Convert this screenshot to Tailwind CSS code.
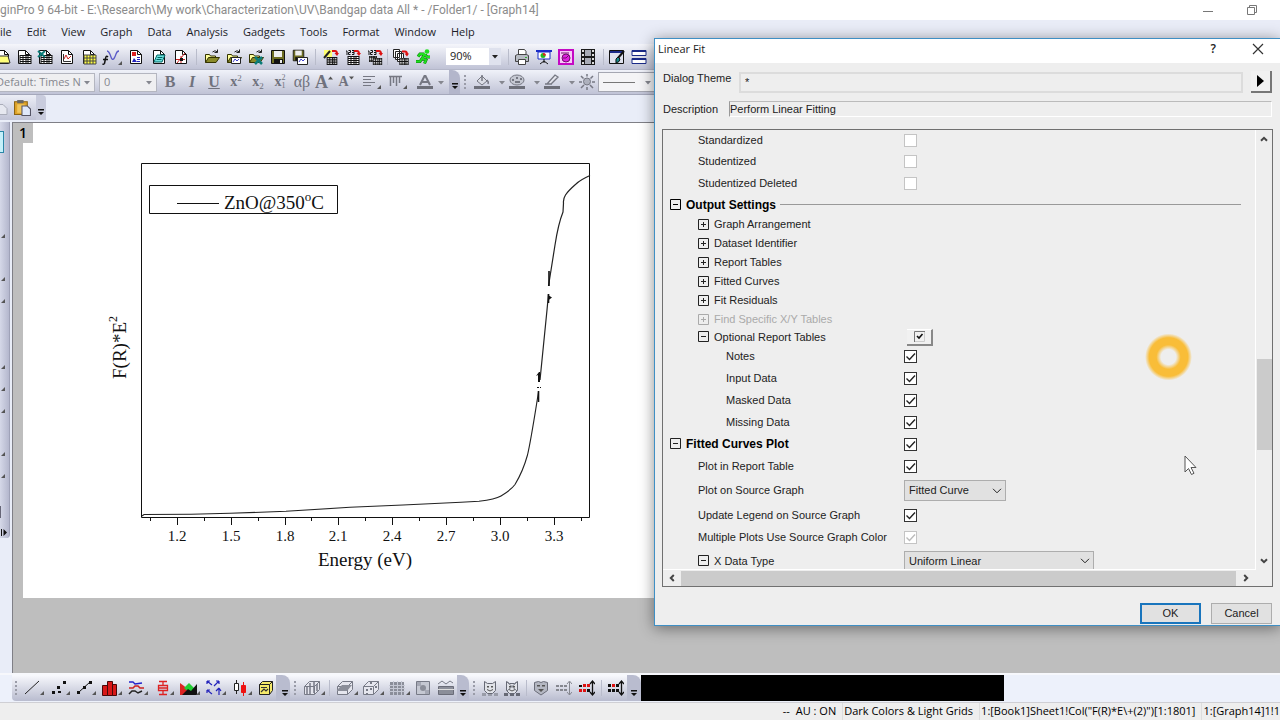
<!DOCTYPE html>
<html lang="en">
<head>
  <meta charset="UTF-8" />
  <meta name="viewport" content="width=device-width, initial-scale=1" />
  <title>OriginPro 9 64-bit - Graph14</title>
  <script src="https://cdn.jsdelivr.net/npm/@tailwindcss/browser@4"></script>
</head>
<body class="relative flex h-screen flex-col overflow-hidden bg-[#e9edf8] font-['Open_Sans','Noto_Sans',sans-serif] text-[11px] text-[#222]">

  <!-- shared icon shapes -->
  <svg class="hidden">
    <symbol id="page" viewBox="0 0 16 16"><path d="M2.5 1.5h7l4 4v9h-11z" fill="#fff" stroke="#111" /><path d="M9.5 1.5v4h4" fill="none" stroke="#111" /></symbol>
    <symbol id="cells" viewBox="0 0 12 9"><path d="M0 0h12v9H0z" fill="#111" /><path d="M1 1h2v1H1zm3 0h2v1H4zm3 0h1v1H7zm2 0h2v1H9zM1 3h2v1H1zm3 0h2v1H4zm3 0h1v1H7zm2 0h2v1H9zM1 5h2v1H1zm3 0h2v1H4zm3 0h1v1H7zm2 0h2v1H9zM1 7h2v1H1zm3 0h2v1H4zm3 0h1v1H7zm2 0h2v1H9z" fill="#fff" /></symbol>
    <symbol id="folder" viewBox="0 0 16 16"><path d="M1.500 13.500v-8h4l1 1.500h5v2" fill="#ffff9c" stroke="#333300" /><path d="M1.500 13.500l3-5h11l-3.500 5z" fill="#8b8b2a" stroke="#333300" /><path d="M8.500 3q2.500-2.500 5 0m0-2.500v3h-3" fill="none" stroke="#222" /></symbol>
    <symbol id="disk" viewBox="0 0 16 16"><path d="M1.500 1.500h13v13h-13z" fill="#6d6d22" stroke="#111" /><path d="M4 2h8v6H4z" fill="#eee" /><path d="M4 10h9v4.500H4z" fill="#111" /><path d="M10 11h2v3h-2z" fill="#eee" /></symbol>
    <symbol id="redarrow" viewBox="0 0 7 6"><path d="M0 1h3q2 0 2 3" fill="none" stroke="#d11" stroke-width="2" /><path d="M2.500 3H7L5 6z" fill="#d11" /></symbol>
    <symbol id="corner" viewBox="0 0 4 4"><path d="M4 0v4H0z" fill="#555" /></symbol>
    <symbol id="down" viewBox="0 0 8 5"><path d="M1 1h6L4 4.500z" fill="currentColor" /></symbol>
    <symbol id="more" viewBox="0 0 8 8"><path d="M1 1h6v1.500H1zM1 4h6L4 7z" fill="#111" /></symbol>
    <symbol id="grip" viewBox="0 0 4 16"><path d="M1 1h2v2H1zm0 4h2v2H1zm0 4h2v2H1zm0 4h2v2H1z" fill="#9a9ca8" /></symbol>
    <symbol id="chev" viewBox="0 0 10 6"><path d="M1 .8l4 4 4-4" fill="none" stroke="currentColor" /></symbol>
    <symbol id="sbarrow" viewBox="0 0 8 6"><path d="M1 4.800l3-3 3 3" fill="none" stroke="#444" stroke-width="2" /></symbol>
    <symbol id="tick" viewBox="0 0 13 13"><path d="M2.500 6.500l3 3 5.500-6" fill="none" stroke="currentColor" stroke-width="1.400" /></symbol>
    <symbol id="plus" viewBox="0 0 12 12"><path d="M.5 .5h10v10H.5zM3 5.500h5M5.500 3v5" fill="none" stroke="currentColor" /></symbol>
    <symbol id="minus" viewBox="0 0 12 12"><path d="M.5 .5h10v10H.5zM3 5.500h5" fill="none" stroke="currentColor" /></symbol>
    <symbol id="cube" viewBox="0 0 18 16"><path d="M1.500 6.500l5-5h10v8l-5 5h-10z M1.500 6.500h10v8M11.500 6.500l5-5" fill="#e5e6ee" stroke="#777a86" /></symbol>
    <symbol id="mask" viewBox="0 0 16 16"><path d="M2.500 1.500l3 2h5l3-2v9l-3 3h-5l-3-3z" fill="#e0e2e8" stroke="#666975" /><path d="M5 6h2v1.500H5zm4 0h2v1.500H9z" fill="#555" /><path d="M5 9.500q3 3 6 0" fill="none" stroke="#555" /></symbol>
  </svg>

  <header class="flex h-5 shrink-0 items-center bg-white text-[#8c8c8c]">
    <h1 class="font-[Roboto,sans-serif] text-xs whitespace-nowrap">ginPro 9 64-bit - E:\Research\My work\Characterization\UV\Bandgap data All * - /Folder1/ - [Graph14]</h1>
    <div class="ml-auto flex items-center gap-8 pr-[22px]">
      <button aria-label="Minimize"><svg class="h-3 w-3" viewBox="0 0 12 12"><path d="M1 7.500h10" stroke="#777" /></svg></button>
      <button aria-label="Restore"><svg class="h-3 w-3" viewBox="0 0 12 12"><path d="M1.500 3.500h7v7h-7zM3.500 3v-1.500h7v7H9" fill="none" stroke="#777" /></svg></button>
    </div>
  </header>

  <nav class="flex h-6 shrink-0 items-center gap-[15px] bg-[#e9ecf7] text-[#1c1c28]">
    <a href="#">ile</a>
    <a href="#">Edit</a>
    <a href="#">View</a>
    <a href="#">Graph</a>
    <a href="#">Data</a>
    <a href="#">Analysis</a>
    <a href="#">Gadgets</a>
    <a href="#">Tools</a>
    <a href="#">Format</a>
    <a href="#">Window</a>
    <a href="#">Help</a>
  </nav>

  <!-- standard toolbar -->
  <div class="flex h-[26px] shrink-0 items-center border-b border-[#b4b7c9] bg-linear-to-b from-[#f5f6fb] to-[#c0c3d6]" role="toolbar" aria-label="Standard">
    <button class="-ml-2 flex w-[22px] shrink-0 justify-center" aria-label="New folder"><svg class="size-4" viewBox="0 0 16 16"><use href="#page" /><path d="M1 7h12l2 7H1z" fill="#ffff7a" stroke="#333" /></svg></button>
    <button class="flex w-[20px] shrink-0 justify-center" aria-label="New workbook"><svg class="size-4" viewBox="0 0 16 16"><use href="#page" /><use href="#cells" x="3" y="6" width="13" height="9" /></svg></button>
    <button class="flex w-[22px] shrink-0 justify-center" aria-label="New Excel"><svg class="size-4" viewBox="0 0 16 16"><use href="#page" /><use href="#cells" x="3" y="6" width="13" height="9" /><path d="M1 2l7 6M8 2L1 8" stroke="#0a7c78" stroke-width="2" /></svg></button>
    <button class="flex w-[22px] shrink-0 justify-center" aria-label="New graph"><svg class="size-4" viewBox="0 0 16 16"><use href="#page" /><path d="M4.500 5v7.500H12" fill="none" stroke="#333" /><path d="M5 10l2-4 2 4 3-3" fill="none" stroke="#c22" /></svg></button>
    <button class="flex w-[22px] shrink-0 justify-center" aria-label="New matrix"><svg class="size-4" viewBox="0 0 16 16"><use href="#page" /><path d="M3 6h12v9H3z" fill="#ffff40" stroke="#444" /><path d="M3 9h12M3 12h12M6 6v9M9 6v9M12 6v9" stroke="#444" /></svg></button>
    <button class="flex w-[24px] shrink-0 justify-center" aria-label="New function"><svg class="h-4 w-5" viewBox="0 0 20 16"><path d="M6 8q-2-2-2.500 1.500l-1 5q-.5 1-2 .5M1 10.500h5" fill="none" stroke="#111" stroke-width="1.500" /><path d="M5 2q2 0 4 6t5-3q1-3 3-3" fill="none" stroke="#5a5ac8" stroke-width="1.300" /><use href="#corner" x="16" y="12" width="4" height="4" /></svg></button>
    <button class="flex w-[24px] shrink-0 justify-center" aria-label="New layout"><svg class="size-4" viewBox="0 0 16 16"><use href="#page" /><path d="M4 3h4v4H4z" fill="#d22" /><path d="M4 13l2-4 3 4z" fill="#22b" /><path d="M9 8.500h3M9 10.500h3M9 12.500h3" stroke="#22b" /></svg></button>
    <button class="flex w-[22px] shrink-0 justify-center" aria-label="New notes"><svg class="size-4" viewBox="0 0 16 16"><use href="#page" /><path d="M6 6h8l-3 7H3z" fill="#6fe0dc" stroke="#066" /><path d="M6.500 8.500h5M5.500 10.500h5" stroke="#066" /></svg></button>
    <button class="flex w-[22px] shrink-0 justify-center" aria-label="Digitize"><svg class="size-4" viewBox="0 0 16 16"><use href="#page" /><path d="M4 14L12 4M8 7v7M3 10.500h9" stroke="#c22" fill="none" /><path d="M7 9h3v3H7z" fill="#111" /></svg></button>
    <span class="mr-1 ml-[4px] h-4 w-px shrink-0 bg-[#b9bccb]"></span>
    <button class="flex w-[22px] shrink-0 justify-center" aria-label="Open"><svg class="size-4"><use href="#folder" /></svg></button>
    <button class="flex w-[22px] shrink-0 justify-center" aria-label="Open template"><svg class="size-4" viewBox="0 0 16 16"><use href="#folder" /><path d="M5.500 8.500h9v6h-9z" fill="#fff" stroke="#222" /><path d="M7 13l2-3 2 2 2-2" stroke="#44c" fill="none" /></svg></button>
    <button class="flex w-[22px] shrink-0 justify-center" aria-label="Open Excel"><svg class="size-4" viewBox="0 0 16 16"><use href="#folder" /><path d="M7 8l7 7M14 8l-7 7" stroke="#0a7c78" stroke-width="2.500" /></svg></button>
    <button class="flex w-[22px] shrink-0 justify-center" aria-label="Save"><svg class="size-4"><use href="#disk" /></svg></button>
    <button class="flex w-[22px] shrink-0 justify-center" aria-label="Save template"><svg class="size-4" viewBox="0 0 16 16"><use href="#disk" width="13" height="13" /><path d="M5.500 8.500h10v7h-10z" fill="#fff" stroke="#222" /><path d="M7 13l2-3 2 2 2-2" stroke="#44c" fill="none" /></svg></button>
    <span class="mx-1 h-4 w-px shrink-0 bg-[#b9bccb]"></span>
    <button class="flex w-[22px] shrink-0 justify-center" aria-label="Import wizard"><svg class="size-4" viewBox="0 0 16 16"><path d="M1 1h8v7H1z" fill="#ffff70" /><path d="M1 9l6-7" stroke="#222" stroke-width="2" /><use href="#redarrow" x="9" y="1" width="7" height="6" /><use href="#cells" x="3" y="8" width="12" height="8" /></svg></button>
    <button class="flex w-[22px] shrink-0 justify-center" aria-label="Import ASCII"><svg class="size-4" viewBox="0 0 16 16"><path d="M1 2h1v4M3.500 1.500h2v2h-2v2h2M7 1.500h2v4H7M7 3.500h2" fill="none" stroke="#111" /><use href="#redarrow" x="9" y="1" width="7" height="6" /><use href="#cells" x="2" y="7" width="13" height="9" /></svg></button>
    <button class="flex w-[22px] shrink-0 justify-center" aria-label="Import multiple ASCII"><svg class="size-4" viewBox="0 0 16 16"><path d="M1 2h1v4M3.500 1.500h2v2h-2v2h2M7 1.500h2v4H7M7 3.500h2" fill="none" stroke="#111" /><use href="#redarrow" x="9" y="1" width="7" height="6" /><use href="#cells" x="1" y="7" width="10" height="6" /><use href="#cells" x="5" y="9" width="11" height="7" /></svg></button>
    <span class="mr-[2px] ml-[1px] h-4 w-px shrink-0 bg-[#b9bccb]"></span>
    <button class="flex w-[22px] shrink-0 justify-center" aria-label="Batch"><svg class="size-4" viewBox="0 0 16 16"><path d="M.5 .5h6v8h-6zM2.500 2.500h6v8h-6zM4.500 4.500h6v8h-6z" fill="#fff" stroke="#222" /><use href="#redarrow" x="9" y="1" width="7" height="7" /><use href="#cells" x="6" y="9" width="10" height="7" /></svg></button>
    <button class="flex w-[22px] shrink-0 justify-center" aria-label="Recalculate"><svg class="size-4" viewBox="0 0 16 16"><path d="M10 5L7 9.500l4 1.500-1.500 3.500M7 9.500L5 12.500H1M9.500 5H5L3 7.500M10 5.500l2 2.500h3" fill="none" stroke="#0a7a0a" stroke-width="3" /><path d="M10 5L7 9.500l4 1.500-1.500 3.500M7 9.500L5 12.500H1M9.500 5H5L3 7.500M10 5.500l2 2.500h3" fill="none" stroke="#1fe01f" stroke-width="2" /><circle cx="12" cy="2.500" r="2.300" fill="#1fe01f" /></svg></button>
    <div class="ml-[12px] flex h-[17px] w-[55px] shrink-0 items-center bg-white">
      <select aria-label="Zoom" class="w-[43px] appearance-none pl-1 text-[11px] outline-none"><option>90%</option></select>
      <span class="flex h-full w-3 items-center justify-center bg-[#dfe2ee]"><svg class="h-[5px] w-2"><use href="#down" /></svg></span>
    </div>
    <span class="mr-[2px] ml-[7px] h-4 w-px shrink-0 bg-[#b9bccb]"></span>
    <button class="flex w-[22px] shrink-0 justify-center" aria-label="Print"><svg class="size-4" viewBox="0 0 16 16"><path d="M4.500 6V.5h6l1.500 2V6" fill="#fff" stroke="#444" /><path d="M1.500 6.500l2-1h9l2 1v6h-13z" fill="#b8bcc4" stroke="#444" /><path d="M4.500 10.500h7v5h-7z" fill="#fff" stroke="#444" /><path d="M11 8h2v1h-2z" fill="#3a3" /></svg></button>
    <button class="flex w-[22px] shrink-0 justify-center" aria-label="Slide show"><svg class="size-4" viewBox="0 0 16 16"><path d="M0 1h16v2H0z" fill="#1a2cc8" /><path d="M2 3h12v7H2z" fill="#fff" stroke="#1a2cc8" /><circle cx="7" cy="6.500" r="2.500" fill="#2b2" /><path d="M7 4v2.500h3A2.500 2.500 0 0 0 7 4" fill="#d22" /><path d="M8 10v4M4 15l4-3 4 3" fill="none" stroke="#111" /></svg></button>
    <button class="flex w-[22px] shrink-0 justify-center" aria-label="Send to PowerPoint"><svg class="size-4" viewBox="0 0 16 16"><path d="M1 1h14v14H1z" fill="#f9c9f9" stroke="#c40ac4" stroke-width="2" /><circle cx="8" cy="9" r="4" fill="#e020e0" stroke="#70106a" /><path d="M8 9l3-3M3 4h8M8 9H5" stroke="#70106a" /></svg></button>
    <button class="flex w-[22px] shrink-0 justify-center" aria-label="Video"><svg class="size-4" viewBox="0 0 16 16"><path d="M1 0h14v16H1z" fill="#1b1b1b" /><path d="M5 1h6v6H5zM5 9h6v6H5z" fill="#a9acb6" /><path d="M2 1h2v2H2zm0 4h2v2H2zm0 4h2v2H2zm0 4h2v2H2zM12 1h2v2h-2zm0 4h2v2h-2zm0 4h2v2h-2zm0 4h2v2h-2z" fill="#ddd" /></svg></button>
    <span class="mr-[2px] ml-[4px] h-4 w-px shrink-0 bg-[#b9bccb]"></span>
    <button class="flex w-[22px] shrink-0 justify-center" aria-label="Edit graph"><svg class="size-4" viewBox="0 0 16 16"><path d="M.5 1.500h14v13H.5z" fill="#dfe2ee" stroke="#111" /><path d="M1 2h13v2H1z" fill="#1a2a88" /><path d="M15 2l-6 7" stroke="#111" stroke-width="2" /><path d="M9 8q-3 1-2 6 4-1 4-4z" fill="#138a8a" stroke="#111" /></svg></button>
    <button class="flex w-[22px] shrink-0 justify-center" aria-label="Tile"><svg class="size-4" viewBox="0 0 16 16"><path d="M1 1.500h14v5H1zM1 9.500h14v5H1z" fill="#fff" stroke="#1a2a88" /><path d="M1 1h14v2H1zM1 9h14v2H1z" fill="#1a2a88" /></svg></button>
  </div>

  <!-- format toolbar -->
  <div class="flex h-[25px] shrink-0 items-center border-b border-[#a5a8bb] bg-linear-to-b from-[#f0f2f9] to-[#c0c3d6] text-[#85878f]" role="toolbar" aria-label="Format">
    <div class="flex h-[19px] w-[95px] shrink-0 items-center border border-l-0 border-[#b4b6c0] bg-[#efeff1]">
      <select aria-label="Font" class="-ml-1 w-[86px] appearance-none whitespace-nowrap outline-none"><option>Default: Times N</option></select>
      <svg class="ml-px h-[5px] w-2"><use href="#down" /></svg>
    </div>
    <div class="ml-1 flex h-[19px] w-[58px] shrink-0 items-center border border-[#b4b6c0] bg-[#efeff1]">
      <select aria-label="Font size" class="w-[45px] appearance-none pl-1 outline-none"><option>0</option></select>
      <svg class="h-[5px] w-2"><use href="#down" /></svg>
    </div>
    <div class="ml-[2px] flex font-['Liberation_Serif',serif] text-base leading-5 text-[#70727d]">
      <button class="w-[22px] font-bold">B</button>
      <button class="w-[22px] font-bold italic">I</button>
      <button class="w-[22px] font-bold underline">U</button>
      <button class="flex w-[22px] items-center justify-center text-sm leading-5 font-bold">x<span class="mb-2 text-[9px] leading-[9px] font-normal">2</span></button>
      <button class="flex w-[22px] items-center justify-center text-sm leading-5 font-bold">x<span class="mt-2 text-[9px] leading-[9px] font-normal">2</span></button>
      <button class="flex w-[22px] items-center justify-center text-sm leading-5 font-bold">x<span class="flex flex-col text-[8px] leading-[8px] font-normal"><span>2</span><span>1</span></span></button>
      <button class="w-[22px]">αβ</button>
      <button class="flex w-[22px] items-center justify-center text-lg leading-5 font-bold">A<svg class="mb-2 h-1 w-[5px]" viewBox="0 0 8 5"><path d="M0 5h8L4 0z" fill="#555" /></svg></button>
      <button class="flex w-[22px] items-center justify-center text-sm leading-5 font-bold">A<svg class="mb-2 h-1 w-[5px]" viewBox="0 0 8 5"><path d="M0 0h8L4 5z" fill="#555" /></svg></button>
    </div>
    <button class="ml-1 flex w-[22px] shrink-0 justify-center" aria-label="Align"><svg class="h-4 w-5" viewBox="0 0 20 16"><path d="M1 2.500h12M1 5.500h8M1 8.500h12M1 11.500h8" stroke="#767883" /><use href="#corner" x="15" y="11" width="4" height="4" /></svg></button>
    <button class="ml-1 flex w-[22px] shrink-0 justify-center" aria-label="Distribute"><svg class="h-4 w-5" viewBox="0 0 20 16"><path d="M1 2.500h13M2.500 2v10M5.500 2v7M8.500 2v10M11.500 2v7" stroke="#767883" stroke-width="1.500" /><use href="#corner" x="15" y="11" width="4" height="4" /></svg></button>
    <button class="ml-1 flex w-9 shrink-0 items-center justify-center gap-1" aria-label="Font color"><svg class="size-4" viewBox="0 0 16 16"><path d="M3 11l4.500-9h1L13 11M5 8h6" fill="none" stroke="#767883" stroke-width="2" /><path d="M0 12h16v3H0z" fill="#6d6f79" /></svg><svg class="h-[5px] w-2"><use href="#down" /></svg></button>
    <span class="flex h-full w-[11px] shrink-0 items-end justify-center rounded-tr-lg bg-[#b3b6cb] pb-1"><svg class="size-2"><use href="#more" /></svg></span>
    <svg class="ml-[3px] h-4 w-1 shrink-0"><use href="#grip" /></svg>
    <button class="ml-[7px] flex w-[35px] shrink-0 items-center gap-2" aria-label="Fill color"><svg class="size-4" viewBox="0 0 16 16"><path d="M3 7l5-5 5 5-5 4z" fill="#dcdee6" stroke="#767883" /><path d="M8 7V1M13 6q2 2 1 4" fill="none" stroke="#767883" stroke-width="1.500" /><path d="M0 12h16v3H0z" fill="#6d6f79" /></svg><svg class="h-[5px] w-2"><use href="#down" /></svg></button>
    <button class="flex w-[35px] shrink-0 items-center gap-2" aria-label="Palette"><svg class="size-4" viewBox="0 0 16 16"><ellipse cx="8" cy="6" rx="7" ry="5" fill="#c5c8d2" stroke="#767883" /><path d="M3 5h2v2H3zm4-2h2v2H7zm4 1h2v2h-2zM6 7h5v2H6z" fill="#767883" /><path d="M0 12h16v3H0z" fill="#6d6f79" /></svg><svg class="h-[5px] w-2"><use href="#down" /></svg></button>
    <button class="flex w-[35px] shrink-0 items-center gap-2" aria-label="Line color"><svg class="size-4" viewBox="0 0 16 16"><path d="M3 10l8-9 3 2-7 7zM1 10h7" fill="#e5e6ee" stroke="#767883" stroke-width="1.300" /><path d="M0 12h16v3H0z" fill="#6d6f79" /></svg><svg class="h-[5px] w-2"><use href="#down" /></svg></button>
    <button class="w-[19px] shrink-0" aria-label="Light"><svg class="size-4" viewBox="0 0 16 16"><circle cx="8" cy="7.500" r="3.500" fill="#aeb1bd" stroke="#767883" /><path d="M8 0v2.500M8 13v3M0 8h3M13 8h3M2 2l2.500 2.500M14 2l-2.500 2.500M2 14l3-3M14 14l-3-3" stroke="#767883" stroke-width="1.500" /></svg></button>
    <div class="flex h-5 w-20 shrink-0 items-center border border-[#a5a7b2] bg-[#f4f4f6] pl-1"><span class="h-px w-8 bg-[#777]"></span><svg class="ml-[9px] h-[5px] w-2"><use href="#down" /></svg></div>
  </div>

  <!-- clipboard toolbar -->
  <div class="flex h-[27px] shrink-0 items-start">
    <div class="flex h-[25px] items-center rounded-br bg-linear-to-b from-[#eceef6] to-[#c0c3d6]">
      <svg class="-ml-1 h-4 w-3" viewBox="0 0 12 16"><path d="M1 4.500h6l4 4v6H1z" fill="#e6e8f0" stroke="#a9acb9" /></svg>
      <button class="ml-[6px] mr-[5px]" aria-label="Paste"><svg class="size-[17px]" viewBox="0 0 16 16"><path d="M.5 2.500h12v12H.5z" fill="#e0a52a" stroke="#8c6414" /><path d="M3 1h6v3H3z" fill="#666" /><path d="M3 5h7v8H3z" fill="#f2c65c" /><path d="M7.500 6.500h5l3 3v6h-8z" fill="#dfe8fa" stroke="#556" /></svg></button>
      <span class="flex h-full w-[10px] items-end justify-center rounded-tr bg-[#c9ccdd] pb-1"><svg class="size-2"><use href="#more" /></svg></span>
    </div>
  </div>

  <main class="flex min-h-0 flex-1">
    <!-- docked tool strip -->
    <div class="w-3 shrink-0">
      <div class="flex h-[416px] w-[10px] flex-col items-end rounded-br border-r border-[#9fa2b8] bg-linear-to-r from-[#d5d8e8] to-[#b4b7cd]">
        <span class="mt-[9px] h-[22px] w-1 self-start border border-l-0 border-[#2a87a8] bg-[#c5f0fa]"></span>
        <svg class="mt-[81px] mr-1 size-1"><use href="#corner" /></svg>
        <svg class="mt-[39px] mr-1 size-1"><use href="#corner" /></svg>
        <svg class="mt-[18px] mr-1 size-1"><use href="#corner" /></svg>
        <svg class="mt-[62px] mr-1 size-1"><use href="#corner" /></svg>
        <svg class="mt-[18px] mr-1 size-1"><use href="#corner" /></svg>
        <svg class="mt-[18px] mr-1 size-1"><use href="#corner" /></svg>
        <svg class="mt-[39px] mr-1 size-1"><use href="#corner" /></svg>
        <svg class="mt-[18px] mr-1 size-1"><use href="#corner" /></svg>
        <span class="mt-7 h-3 w-px self-start bg-[#667]"></span>
        <svg class="mt-auto mr-[2px] mb-[2px] h-[7px] w-[6px]" viewBox="0 0 6 7"><path d="M0 0h1v7H0zM2.500 0v7L6 3.500z" fill="#111" /></svg>
      </div>
    </div>

    <div class="flex flex-1 flex-col border-t border-l border-[#7f7f86] bg-[#bebebe]">
      <div class="flex h-[475px]">
        <span class="z-10 -mr-[10px] h-5 w-5 shrink-0 bg-[#bebebe] text-center text-sm leading-5 font-semibold text-black">1</span>
        <div class="flex-1 bg-white pt-[27px] pl-[77px]">
          <svg class="h-[430px] w-[500px]" viewBox="100 150 500 430" font-family="'Liberation Serif', serif" fill="#111">
            <path d="M141.500 163.500h448v354h-448z" fill="none" stroke="#111" />
            <path d="M177.500 518v7M231.500 518v7M285.500 518v7M338.500 518v7M392.500 518v7M446.500 518v7M500.500 518v7M554.500 518v7M150.500 518v3M204.500 518v3M258.500 518v3M311.500 518v3M365.500 518v3M419.500 518v3M473.500 518v3M527.500 518v3M581.500 518v3" stroke="#111" />
            <path d="M142 516l2-1.500 47-.2 39-1 56-2 64-4 53-2.300 58-2.700 18-1C490 500 496 499 501 496S511 490 515 484.500C522 473 525 464 527.500 455C531 440 534 420 538.500 392" fill="none" stroke="#222" stroke-width="1.100" />
            <path d="M590 175.500Q580 180 576 184Q568 191 565.500 195Q563 199 563.500 203L563 212C559 222 557 232 555 245L548.500 286M548.500 294L547 310 540 380" fill="none" stroke="#222" stroke-width="1.200" />
            <path d="M549 271v15M548.500 294v9M538.500 391v11" stroke="#111" stroke-width="1.600" />
            <path d="M548 295l4 2.500-4 3zM536 376l3-4h1v10h-2v-7zM537 387h2v1h-2zM540 387h1v1h-1z" />
            <path d="M149.500 185.500h188v28h-188z" fill="none" stroke="#111" />
            <path d="M177 203.500h42" stroke="#111" />
            <text x="224" y="209" font-size="19">ZnO@350<tspan dy="-8" font-size="13">o</tspan><tspan dy="8">C</tspan></text>
            <g font-size="15" text-anchor="middle">
              <text x="177" y="541">1.2</text>
              <text x="231" y="541">1.5</text>
              <text x="285" y="541">1.8</text>
              <text x="338" y="541">2.1</text>
              <text x="392" y="541">2.4</text>
              <text x="446" y="541">2.7</text>
              <text x="500" y="541">3.0</text>
              <text x="554" y="541">3.3</text>
            </g>
            <text x="365" y="566" font-size="19" text-anchor="middle">Energy (eV)</text>
            <text transform="translate(126 379) rotate(-90)" font-size="19">F(R)*E<tspan dy="-9" font-size="12">2</tspan></text>
          </svg>
        </div>
      </div>
    </div>
  </main>

  <!-- 2D and 3D graph toolbars -->
  <footer class="shrink-0 border-t-2 border-[#f7f8fc] bg-[#edf1fb]">
    <div class="flex h-[27px] items-start">
      <div class="ml-3 flex h-[26px] items-center rounded-bl bg-linear-to-b from-[#f8f9fd] to-[#b9bccf]" role="toolbar" aria-label="2D graphs">
        <svg class="mx-[2px] h-4 w-1"><use href="#grip" /></svg>
        <button aria-label="Line"><svg class="h-5 w-[26px]" viewBox="0 0 26 20"><path d="M5 16L19 3" stroke="#222" /><use href="#corner" x="20" y="13" width="4" height="4" /></svg></button>
        <button aria-label="Scatter"><svg class="h-5 w-[26px]" viewBox="0 0 26 20"><path d="M6 13h3v3H6zM11 8h3v3h-3zM12 13h3v2h-3zM17 3h3v3h-3z" fill="#111" /><use href="#corner" x="20" y="13" width="4" height="4" /></svg></button>
        <button aria-label="Line and symbol"><svg class="h-5 w-[26px]" viewBox="0 0 26 20"><path d="M7 14L18 4" stroke="#111" /><path d="M5 13h3v3H5zM11 8h3v3h-3zM17 3h3v3h-3z" fill="#111" /><use href="#corner" x="20" y="13" width="4" height="4" /></svg></button>
        <button aria-label="Column"><svg class="h-5 w-[26px]" viewBox="0 0 26 20"><path d="M4.500 7.500h5v10h-5zM9.500 3.500h5v14h-5zM14.500 6.500h4v11h-4z" fill="#d81818" stroke="#4a0808" /><use href="#corner" x="20" y="13" width="4" height="4" /></svg></button>
        <button aria-label="Multi curve"><svg class="h-5 w-[26px]" viewBox="0 0 26 20"><path d="M5 4h4l2 2 7-1" fill="none" stroke="#22c" stroke-width="1.300" /><path d="M5 10h4l2-2h3l2 2h4" fill="none" stroke="#c22" stroke-width="1.600" /><path d="M5 16l3-3h3l3 2 4-2" fill="none" stroke="#222" stroke-width="1.500" /><use href="#corner" x="20" y="13" width="4" height="4" /></svg></button>
        <button aria-label="Box"><svg class="h-5 w-[26px]" viewBox="0 0 26 20"><path d="M9 3.500h8M13 3v4M8.500 7.500h9v5h-9zM8 10h10M13 13v4M9 16.500h8" fill="none" stroke="#d22" stroke-width="1.300" /><use href="#corner" x="20" y="13" width="4" height="4" /></svg></button>
        <button aria-label="Area"><svg class="h-5 w-[26px]" viewBox="0 0 26 20"><path d="M4 5l8 6v6H4z" fill="#d22" /><path d="M8 10l5-5 6 6-5 4z" fill="#2c3" /><path d="M6 17l6-6 3 2 6-7v11z" fill="#111" /><use href="#corner" x="20" y="13" width="4" height="4" /></svg></button>
        <button aria-label="Vector"><svg class="h-5 w-[26px]" viewBox="0 0 26 20"><path d="M5 3l5 4M5 3h3M5 3v3M12 8l5-5M17 3h-3M17 3v3M5 12l5 4M5 12h3M5 12v3M17 17v-7M17 10l-3 3M17 10l2 3" fill="none" stroke="#22b" stroke-width="1.200" /><use href="#corner" x="20" y="13" width="4" height="4" /></svg></button>
        <button aria-label="Stock"><svg class="h-5 w-[26px]" viewBox="0 0 26 20"><path d="M8.500 2v14" stroke="#222" /><path d="M6.500 5.500h4v7h-4z" fill="#fff" stroke="#222" /><path d="M15.500 4v14M13.500 7.500h4v7h-4z" fill="#e11" stroke="#e11" /><use href="#corner" x="20" y="13" width="4" height="4" /></svg></button>
        <button aria-label="Template library"><svg class="h-5 w-[22px]" viewBox="0 0 22 20"><path d="M5.500 6.500l3-3h10v9l-3 4h-10z" fill="#f5e96a" stroke="#222" /><path d="M5.500 6.500h10v10M15.500 6.500l3-3" fill="none" stroke="#222" /><path d="M7 9.500h6M7 14l3-3 2 2 2-2" fill="none" stroke="#333" stroke-width="1.200" /></svg></button>
        <span class="flex h-full w-[14px] items-end justify-center rounded-tr-lg bg-[#b9bccf] pb-1 pl-1"><svg class="size-2"><use href="#more" /></svg></span>
      </div>
      <div class="flex h-[26px] items-center bg-linear-to-b from-[#f8f9fd] to-[#b9bccf]" role="toolbar" aria-label="3D graphs">
        <svg class="mx-[3px] h-4 w-1"><use href="#grip" /></svg>
        <button aria-label="3D bars"><svg class="h-5 w-[26px]" viewBox="0 0 26 20"><use href="#cube" x="3" y="2" width="18" height="16" /><path d="M7 8v8M10 5v11M14 4v11M17 6v7" stroke="#777a86" stroke-width="1.500" /><use href="#corner" x="21" y="13" width="4" height="4" /></svg></button>
        <span class="mx-[3px] h-4 w-px bg-[#b9bccb]"></span>
        <button aria-label="3D surface"><svg class="h-5 w-[26px]" viewBox="0 0 26 20"><use href="#cube" x="3" y="2" width="18" height="16" /><path d="M4 12l5-5h10l-5 6H4z" fill="#8b8e99" /><use href="#corner" x="21" y="13" width="4" height="4" /></svg></button>
        <button aria-label="3D scatter"><svg class="h-5 w-[26px]" viewBox="0 0 26 20"><use href="#cube" x="3" y="2" width="18" height="16" /><path d="M7 11h2v2H7zm4-1h2v2h-2zm0-6h2v2h-2zm5 4h2v2h-2zM7 15h2v2H7z" fill="#777a86" /><use href="#corner" x="21" y="13" width="4" height="4" /></svg></button>
        <button aria-label="Heat map"><svg class="h-5 w-[26px]" viewBox="0 0 26 20"><path d="M5 4h14v13H5z" fill="#8b8e99" /><path d="M4 7.500h16M4 10.500h16M4 13.500h16M8.500 3v14M12.500 3v14M16.500 3v14" stroke="#c5c8d4" /><use href="#corner" x="21" y="13" width="4" height="4" /></svg></button>
        <button aria-label="Image"><svg class="h-5 w-6" viewBox="0 0 24 20"><path d="M5.500 3.500h13v13h-13z" fill="#c5c8d2" stroke="#777a86" /><path d="M6 4h4v4H6zM14 12h4v4h-4z" fill="#a5a8b4" /><circle cx="12" cy="10" r="3" fill="#8b8e99" /></svg></button>
        <button aria-label="Profile"><svg class="h-5 w-[22px]" viewBox="0 0 22 20"><path d="M3 6l4-3 4 3 4-3 3 2" fill="none" stroke="#777a86" /><path d="M3.500 8.500h15v8h-15z" fill="#8b8e99" stroke="#6a6c78" /><path d="M3 11.500h16" stroke="#ddd" /></svg></button>
        <span class="flex h-full w-3 items-end justify-center rounded-tr-lg bg-[#b9bccf] pb-1"><svg class="size-2"><use href="#more" /></svg></span>
      </div>
      <div class="flex h-[26px] items-center bg-linear-to-b from-[#f8f9fd] to-[#b9bccf]" role="toolbar" aria-label="Mask">
        <svg class="mx-[3px] h-4 w-1"><use href="#grip" /></svg>
        <button class="flex w-[22px] justify-center" aria-label="Mask points"><svg class="size-4" viewBox="0 0 16 16"><use href="#mask" /><path d="M0 13h4v3H0zm6 1h4v2H6zm6-1h4v3h-4z" fill="#999ca8" /></svg></button>
        <button class="flex w-[22px] justify-center" aria-label="Unmask points"><svg class="size-4" viewBox="0 0 16 16"><use href="#mask" /><path d="M3 2l10 9M13 2L3 11" stroke="#777a86" /><path d="M0 13h4v3H0zm6 0h4v3H6zm6 0h4v3h-4z" fill="#666975" /></svg></button>
        <span class="mx-[3px] h-4 w-px bg-[#b9bccb]"></span>
        <button class="flex w-[22px] justify-center" aria-label="Mask color"><svg class="size-4" viewBox="0 0 16 16"><path d="M1.500 2.500l4-1 2.500 1 2.500-1 4 1v8L8 15 1.500 10.500z" fill="#b4b7c2" stroke="#6a6c78" /><path d="M4 5h3v1.500H4zm5 0h3v1.500H9zM5 9h6l-3 3z" fill="#555" /></svg></button>
        <button class="flex w-[23px] justify-center" aria-label="Swap mask"><svg class="size-4" viewBox="0 0 16 16"><path d="M0 5h3v2H0zm4 0h3v2H4zm4 0h3v2H8zM0 9h3v2H0zm4 0h3v2H4zm4 0h3v2H8z" fill="#85878f" /><path d="M13.500 2v13M11 4l2.500-3L16 4M11 12l2.500 3 2.500-3" fill="none" stroke="#85878f" /></svg></button>
        <button class="flex w-[23px] justify-center" aria-label="Hide mask"><svg class="size-4" viewBox="0 0 16 16"><path d="M0 9h3v3H0zm4-5h3v3H4zm4 0h3v3H8zM4 9h3v3H4z" fill="#d11" /><path d="M0 5h3v2H0zm8 4h3v3H8z" fill="#111" /><path d="M13.500 2v13M11 4l2.500-3L16 4M11 12l2.500 3 2.500-3" fill="none" stroke="#111" stroke-width="1.300" /></svg></button>
        <span class="mx-[3px] h-4 w-px bg-[#b9bccb]"></span>
        <button class="flex w-[22px] justify-center" aria-label="Enable mask"><svg class="size-4" viewBox="0 0 16 16"><path d="M4 4h3v3H4z" fill="#d11" /><path d="M0 4h3v3H0zm8 0h3v3H8zM0 9h3v3H0zm4 0h3v3H4zm4 0h3v3H8z" fill="#111" /><path d="M13.500 2v13M11 4l2.500-3L16 4M11 12l2.500 3 2.500-3" fill="none" stroke="#111" stroke-width="1.300" /></svg></button>
        <span class="flex h-full w-[14px] items-end justify-center rounded-tr-lg bg-[#b9bccf] pb-1"><svg class="size-2"><use href="#more" /></svg></span>
      </div>
      <div class="h-[26px] w-[363px] bg-black"></div>
    </div>
    <div class="flex h-[18px] items-center border-t border-[#cfcfd4] bg-[#eee] whitespace-nowrap text-black">
      <div class="ml-auto flex items-center gap-[6px]">
        <span>--</span>
        <span>AU : ON</span>
        <span class="border-l border-[#ddd] pl-px">Dark Colors &amp; Light Grids</span>
        <span class="border-l border-[#ddd] pl-px">1:[Book1]Sheet1!Col("F(R)*E\+(2)")[1:1801]</span>
        <span class="border-l border-[#ddd] pl-px">1:[Graph14]1!1</span>
      </div>
    </div>
  </footer>

  <!-- Linear Fit dialog -->
  <section class="absolute top-[38px] right-0 left-[654px] z-20 flex h-[588px] flex-col border-y border-l border-[#3f8fc4] bg-[#eee] font-['Liberation_Sans',Arial,sans-serif] text-[11px] text-[#222] shadow-[0_2px_14px_rgba(0,0,0,0.45)]" role="dialog" aria-labelledby="dlg-title">
    <div class="flex h-6 shrink-0 items-center bg-white pb-1 pl-[3px] font-['Open_Sans','Noto_Sans',sans-serif]">
      <h2 id="dlg-title">Linear Fit</h2>
      <button class="mr-9 ml-auto text-xs font-semibold" aria-label="Help">?</button>
      <button class="mr-4" aria-label="Close"><svg class="size-3" viewBox="0 0 12 12"><path d="M1 1l10 10M11 1L1 11" stroke="#333" stroke-width="1.200" /></svg></button>
    </div>
    <div class="mt-2 flex h-[22px] shrink-0 items-center pl-2">
      <label for="theme" class="mb-2 w-[76px]">Dialog Theme</label>
      <input id="theme" value="*" readonly class="h-[21px] min-w-0 flex-1 border-2 border-[#dcdcdc] bg-[#eee] px-1 outline-none" />
      <button class="mr-2 ml-2 flex h-[22px] w-[21px] items-center justify-center border-r-2 border-b-2 border-[#777] bg-[#f1f1f1]" aria-label="Theme menu"><svg class="h-3 w-[7px]" viewBox="0 0 7 12"><path d="M0 0l7 6-7 6z" /></svg></button>
    </div>
    <div class="mt-2 flex h-4 shrink-0 items-center pr-2 pl-2">
      <label for="desc" class="w-[66px]">Description</label>
      <input id="desc" value="Perform Linear Fitting" readonly class="h-4 min-w-0 flex-1 border border-t-[#bbb] border-r-white border-b-white border-l-[#999] bg-[#eee] outline-none" />
    </div>

    <div class="mt-3 mr-[7px] ml-[7px] flex h-[458px] shrink-0 flex-col border border-[#707070]">
      <div class="flex min-h-0 flex-1">
        <div class="min-w-0 flex-1 overflow-hidden border-r border-b border-white pl-[7px]">
          <div class="flex h-5 items-center pl-7"><label for="c1" class="w-[206px]">Standardized</label><input id="c1" type="checkbox" disabled class="size-[13px] appearance-none border border-[#c4c4c4] bg-white" /></div>
          <div class="flex h-[22px] items-center pl-7"><label for="c2" class="w-[206px]">Studentized</label><input id="c2" type="checkbox" disabled class="size-[13px] appearance-none border border-[#c4c4c4] bg-white" /></div>
          <div class="flex h-[22px] items-center pl-7"><label for="c3" class="w-[206px]">Studentized Deleted</label><input id="c3" type="checkbox" disabled class="size-[13px] appearance-none border border-[#c4c4c4] bg-white" /></div>
          <div class="flex h-[21px] items-center gap-1 pr-[14px] text-xs font-bold text-black"><button class="flex" aria-label="Collapse"><svg class="size-3"><use href="#minus" /></svg></button>Output Settings<span class="h-px flex-1 bg-[#999]"></span></div>
          <div class="flex h-[19px] items-center gap-1 pl-7"><button class="flex" aria-label="Expand"><svg class="size-3"><use href="#plus" /></svg></button>Graph Arrangement</div>
          <div class="flex h-[19px] items-center gap-1 pl-7"><button class="flex" aria-label="Expand"><svg class="size-3"><use href="#plus" /></svg></button>Dataset Identifier</div>
          <div class="flex h-[19px] items-center gap-1 pl-7"><button class="flex" aria-label="Expand"><svg class="size-3"><use href="#plus" /></svg></button>Report Tables</div>
          <div class="flex h-[19px] items-center gap-1 pl-7"><button class="flex" aria-label="Expand"><svg class="size-3"><use href="#plus" /></svg></button>Fitted Curves</div>
          <div class="flex h-[19px] items-center gap-1 pl-7"><button class="flex" aria-label="Expand"><svg class="size-3"><use href="#plus" /></svg></button>Fit Residuals</div>
          <div class="flex h-[19px] items-center gap-1 pl-7 text-[#aaa]"><button class="flex" disabled aria-label="Expand"><svg class="size-3"><use href="#plus" /></svg></button>Find Specific X/Y Tables</div>
          <div class="flex h-4 items-center gap-1 pl-7"><button class="flex" aria-label="Collapse"><svg class="size-3"><use href="#minus" /></svg></button><span class="w-[189px]">Optional Report Tables</span><button class="flex h-[17px] w-[26px] items-center justify-center border-t border-r-2 border-b-2 border-t-white border-r-[#888] border-b-[#888] bg-[#f1f1f1]" aria-label="Check all"><svg class="size-[11px]" viewBox="0 0 11 11"><path d="M.5 11V.5H11" fill="none" stroke="#777" /><path d="M10.500 1v9.500H1" fill="none" stroke="#ccc" /><path d="M3 5l2 2 3.500-4" fill="none" stroke="#111" stroke-width="1.600" /></svg></button></div>
          <div class="flex h-[22px] items-center pl-14"><label for="c4" class="w-[178px]">Notes</label><span class="grid size-[13px]"><input id="c4" type="checkbox" checked class="col-start-1 row-start-1 size-[13px] appearance-none border border-[#333] bg-white" /><svg class="pointer-events-none col-start-1 row-start-1 size-[13px]"><use href="#tick" /></svg></span></div>
          <div class="flex h-[22px] items-center pl-14"><label for="c5" class="w-[178px]">Input Data</label><span class="grid size-[13px]"><input id="c5" type="checkbox" checked class="col-start-1 row-start-1 size-[13px] appearance-none border border-[#333] bg-white" /><svg class="pointer-events-none col-start-1 row-start-1 size-[13px]"><use href="#tick" /></svg></span></div>
          <div class="flex h-[22px] items-center pl-14"><label for="c6" class="w-[178px]">Masked Data</label><span class="grid size-[13px]"><input id="c6" type="checkbox" checked class="col-start-1 row-start-1 size-[13px] appearance-none border border-[#333] bg-white" /><svg class="pointer-events-none col-start-1 row-start-1 size-[13px]"><use href="#tick" /></svg></span></div>
          <div class="flex h-[22px] items-center pl-14"><label for="c7" class="w-[178px]">Missing Data</label><span class="grid size-[13px]"><input id="c7" type="checkbox" checked class="col-start-1 row-start-1 size-[13px] appearance-none border border-[#333] bg-white" /><svg class="pointer-events-none col-start-1 row-start-1 size-[13px]"><use href="#tick" /></svg></span></div>
          <div class="flex h-[22px] items-center gap-1"><button class="flex" aria-label="Collapse"><svg class="size-3"><use href="#minus" /></svg></button><label for="c8" class="w-[214px] text-xs font-bold text-black">Fitted Curves Plot</label><span class="grid size-[13px]"><input id="c8" type="checkbox" checked class="col-start-1 row-start-1 size-[13px] appearance-none border border-[#333] bg-white" /><svg class="pointer-events-none col-start-1 row-start-1 size-[13px]"><use href="#tick" /></svg></span></div>
          <div class="flex h-[22px] items-center pl-7"><label for="c9" class="w-[206px]">Plot in Report Table</label><span class="grid size-[13px]"><input id="c9" type="checkbox" checked class="col-start-1 row-start-1 size-[13px] appearance-none border border-[#333] bg-white" /><svg class="pointer-events-none col-start-1 row-start-1 size-[13px]"><use href="#tick" /></svg></span></div>
          <div class="flex h-[27px] items-center pl-7"><label for="s1" class="w-[206px]">Plot on Source Graph</label><span class="grid w-[102px] items-center"><select id="s1" class="col-start-1 row-start-1 h-[21px] w-full appearance-none border border-[#adadad] bg-[#e1e1e1] pl-1"><option>Fitted Curve</option></select><svg class="pointer-events-none col-start-1 row-start-1 mr-1 h-[6px] w-[10px] justify-self-end"><use href="#chev" /></svg></span></div>
          <div class="flex h-[22px] items-center pl-7"><label for="c10" class="w-[206px]">Update Legend on Source Graph</label><span class="grid size-[13px]"><input id="c10" type="checkbox" checked class="col-start-1 row-start-1 size-[13px] appearance-none border border-[#333] bg-white" /><svg class="pointer-events-none col-start-1 row-start-1 size-[13px]"><use href="#tick" /></svg></span></div>
          <div class="flex h-[22px] items-center pl-7"><label for="c11" class="w-[206px]">Multiple Plots Use Source Graph Color</label><span class="grid size-[13px] text-[#bbb]"><input id="c11" type="checkbox" checked disabled class="col-start-1 row-start-1 size-[13px] appearance-none border border-[#c4c4c4] bg-white" /><svg class="pointer-events-none col-start-1 row-start-1 size-[13px]"><use href="#tick" /></svg></span></div>
          <div class="flex h-[26px] items-center gap-1 pl-7"><button class="flex" aria-label="Collapse"><svg class="size-3"><use href="#minus" /></svg></button><label for="s2" class="w-[186px]">X Data Type</label><span class="grid w-[190px] items-center"><select id="s2" class="col-start-1 row-start-1 h-[21px] w-full appearance-none border border-[#adadad] bg-[#e1e1e1] pl-1"><option>Uniform Linear</option></select><svg class="pointer-events-none col-start-1 row-start-1 mr-1 h-[6px] w-[10px] justify-self-end"><use href="#chev" /></svg></span></div>
        </div>
        <div class="flex w-4 shrink-0 flex-col items-center py-[6px]">
          <svg class="h-[6px] w-2"><use href="#sbarrow" /></svg>
          <span class="mt-[217px] h-[91px] w-[15px] bg-[#cbcbcb]"></span>
          <svg class="mt-auto h-[6px] w-2 rotate-180"><use href="#sbarrow" /></svg>
        </div>
      </div>
      <div class="flex h-4 shrink-0 items-center">
        <span class="flex w-[18px] justify-center"><svg class="h-[6px] w-2 -rotate-90"><use href="#sbarrow" /></svg></span>
        <span class="h-[15px] flex-1 bg-[#cbcbcb]"></span>
        <span class="mr-4 flex w-5 justify-center"><svg class="h-[6px] w-2 rotate-90"><use href="#sbarrow" /></svg></span>
      </div>
    </div>

    <div class="mt-4 mr-2 flex justify-end gap-[10px]">
      <button class="h-[21px] w-[61px] border-2 border-[#1975bd] bg-[#e1e1e1]">OK</button>
      <button class="h-[21px] w-[61px] border border-[#adadad] bg-[#e1e1e1]">Cancel</button>
    </div>
  </section>

  <!-- click ring and pointer -->
  <svg class="pointer-events-none absolute top-[333px] left-[1144px] z-30 size-12" viewBox="0 0 48 48">
    <radialGradient id="ring"><stop offset=".32" stop-color="#f9bd38" stop-opacity="0" /><stop offset=".52" stop-color="#f9bd38" /><stop offset=".82" stop-color="#f9bd38" /><stop offset="1" stop-color="#f9bd38" stop-opacity="0" /></radialGradient>
    <circle cx="24.500" cy="24" r="23.500" fill="url(#ring)" />
  </svg>
  <svg class="pointer-events-none absolute top-[455px] left-[1184px] z-30 h-5 w-[14px]" viewBox="0 0 14 20"><path d="M1 1v16l3.500-3.500 3 6 2.500-1.200-3-5.800h5z" fill="#fff" stroke="#555" /></svg>
</body>
</html>
